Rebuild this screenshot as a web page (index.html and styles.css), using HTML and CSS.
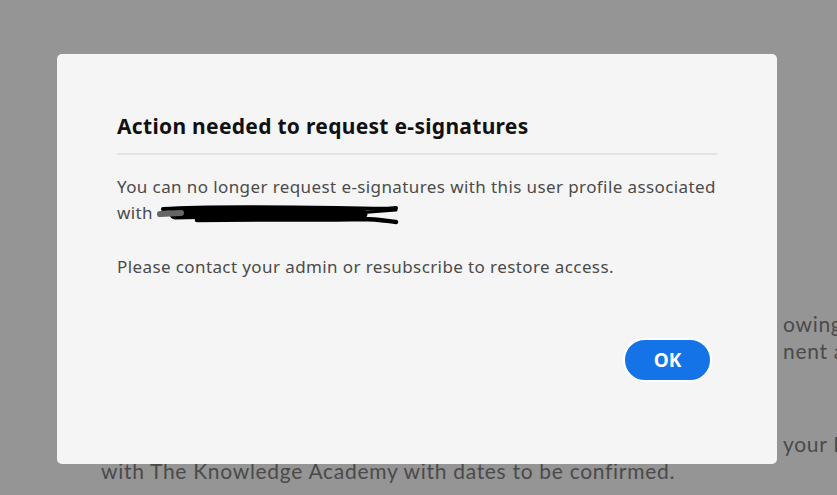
FILE: index.html
```html
<!DOCTYPE html>
<html>
<head>
<meta charset="utf-8">
<link rel="stylesheet" href="styles.css">
</head>
<body>
<div class="page">
  <div class="bg-line right first">owing t</div>
  <div class="bg-line right">nent ar</div>
  <div class="bg-line right gap">your F</div>
  <div class="bg-line left">with The Knowledge Academy with dates to be confirmed.</div>
</div>
<div class="dialog" role="dialog">
  <h2 class="title">Action needed to request e-signatures</h2>
  <div class="divider"></div>
  <p class="body">You can no longer request e-signatures with this user profile associated<br>with <svg class="scribble" viewBox="0 0 242 24" width="242" height="24"><path d="M6 6 C50 3 120 4 180 5 S225 6 239 5" fill="none" stroke="#000" stroke-width="4" stroke-linecap="round"/><path d="M18 11 C70 9 140 11 205 11" fill="none" stroke="#000" stroke-width="11" stroke-linecap="round"/><path d="M40 17 C110 16 170 17 205 16 C220 16 230 18 239 19" fill="none" stroke="#000" stroke-width="4.5" stroke-linecap="round"/><path d="M200 10 L239 7" fill="none" stroke="#000" stroke-width="3" stroke-linecap="round"/><path d="M3 11 L24 10" fill="none" stroke="#666" stroke-width="6" stroke-linecap="round"/></svg></p>
  <p class="body second">Please contact your admin or resubscribe to restore access.</p>
  <div class="actions">
    <button class="ok">OK</button>
  </div>
</div>
</body>
</html>
```
FILE: styles.css
```css
html, body {
  margin: 0;
  padding: 0;
  height: 100%;
}
body {
  background: #959595;
  font-family: "Lato", "Noto Sans", sans-serif;
  overflow: hidden;
}
.page {
  padding-top: 310px;
  color: #4a4a4a;
  font-size: 21px;
  letter-spacing: 0.7px;
  line-height: 27px;
}
.bg-line.right {
  padding-left: 783px;
  white-space: nowrap;
}
.bg-line.gap {
  margin-top: 66px;
}
.bg-line.left {
  padding-left: 101px;
}
.dialog {
  position: absolute;
  left: 57px;
  top: 54px;
  width: 720px;
  height: 410px;
  box-sizing: border-box;
  padding: 59px 60px 0 60px;
  background: #f5f5f5;
  border-radius: 5px;
  font-family: "Noto Sans", sans-serif;
}
.title {
  margin: 0;
  font-size: 21px;
  letter-spacing: 0.3px;
  line-height: 26px;
  font-weight: 700;
  color: #111;
}
.divider {
  height: 2px;
  background: #e3e3e3;
  margin-top: 14px;
}
.body {
  margin: 19px 0 0 0;
  font-size: 17px;
  letter-spacing: 0.4px;
  line-height: 26px;
  color: #4b4b4b;
}
.body.second {
  margin-top: 27px;
}
.scribble {
  vertical-align: -8px;
  margin-left: -1px;
}
.actions {
  display: flex;
  justify-content: flex-end;
  padding-right: 5px;
  margin-top: 58px;
}
.ok {
  width: 89px;
  height: 44px;
  border-radius: 22px;
  background: #1473e6;
  border: 2px solid #ffffff;
  color: #fff;
  font-family: "Noto Sans", sans-serif;
  font-weight: 700;
  font-size: 19px;
  padding: 0;
}
```
